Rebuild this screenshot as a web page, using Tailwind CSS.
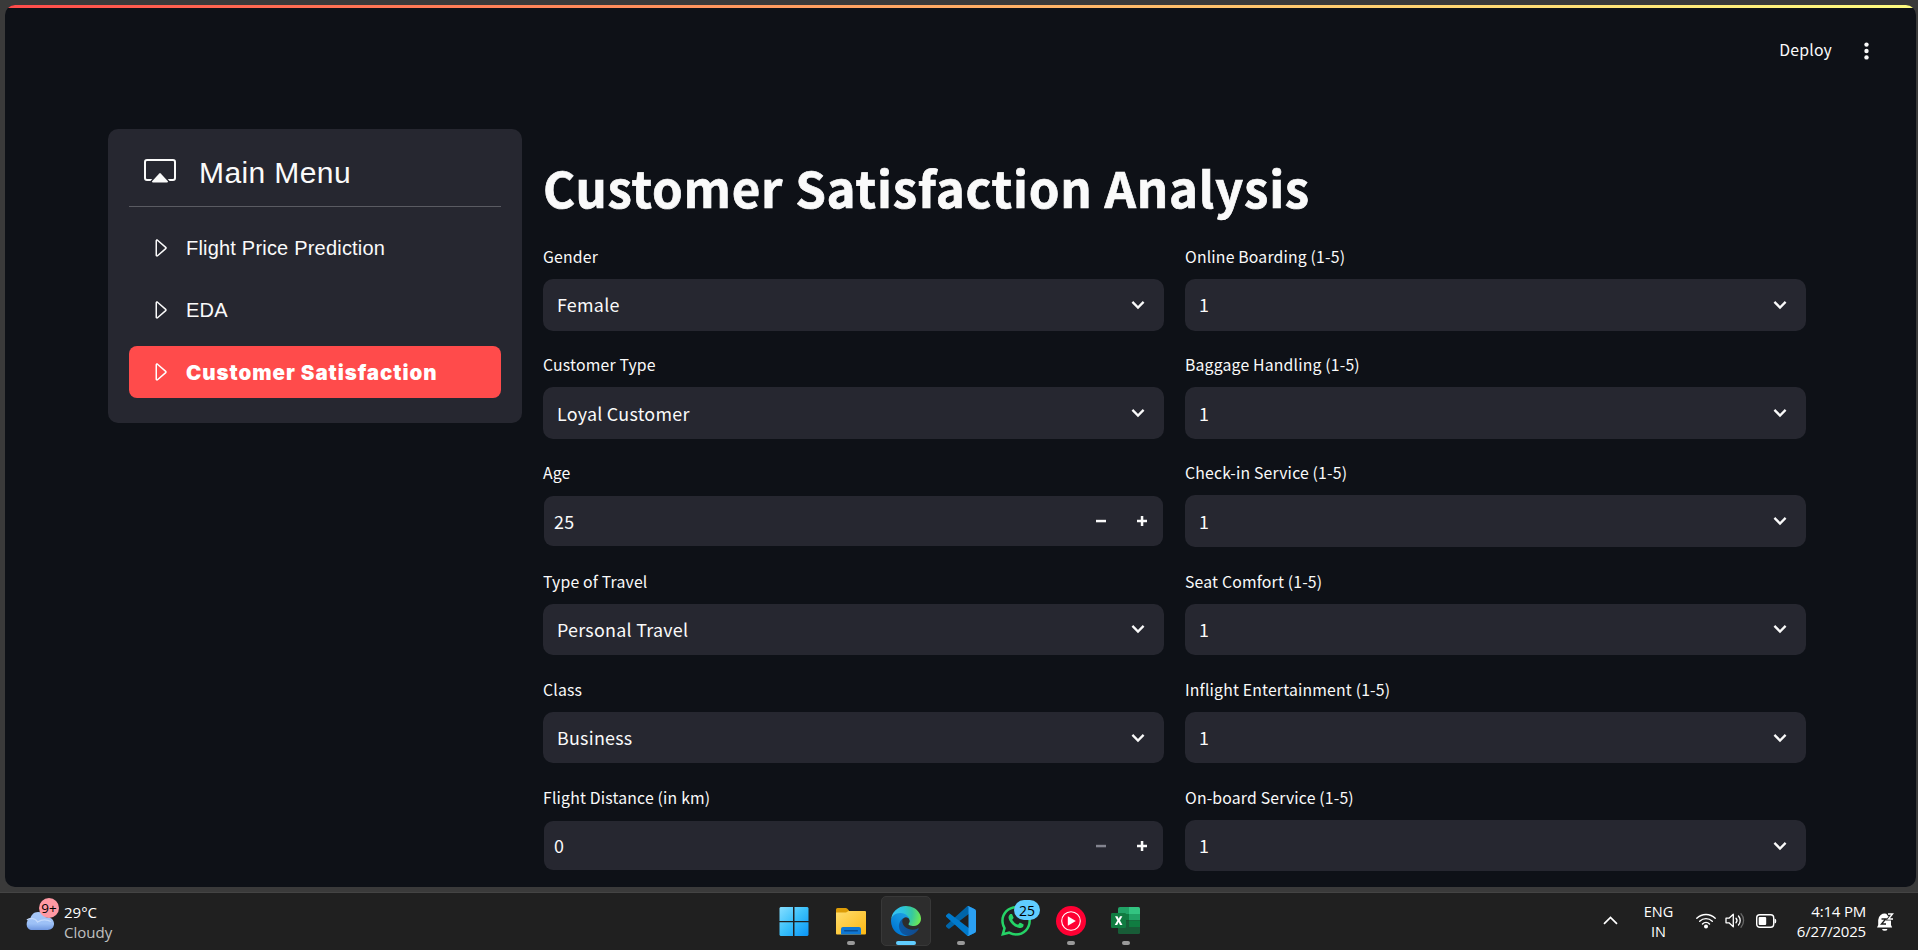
<!DOCTYPE html>
<html lang="en">
<head>
<meta charset="utf-8">
<title>Customer Satisfaction Analysis</title>
<script src="https://cdn.jsdelivr.net/npm/@tailwindcss/browser@4"></script>
</head>
<body class="h-[950px] w-[1918px] overflow-hidden bg-[#3a3a3a] flex flex-col text-[#fafafa]">
<svg class="hidden">
  <symbol id="chevron" viewBox="0 0 14 10"><path d="M1.400 1.900L7 7.500l5.600-5.600" fill="none" stroke="currentColor" stroke-width="2.300"/></symbol>
  <symbol id="minus" viewBox="0 0 10 10"><path d="M0 3.800h10v2.500H0z" fill="currentColor"/></symbol>
  <symbol id="plus" viewBox="0 0 10 10"><path d="M3.800 0h2.500v3.800H10v2.500H6.300V10H3.800V6.300H0V3.800h3.800z" fill="currentColor"/></symbol>
  <symbol id="caret" viewBox="0 0 16 16"><path d="M6 12.796V3.204L11.481 8zm.659.753 5.480-4.796a1 1 0 0 0 0-1.506L6.660 2.451C6.011 1.885 5 2.345 5 3.204v9.592a1 1 0 0 0 1.659.753" fill="currentColor"/></symbol>
</svg>

<!-- App window -->
<main class="mt-[5px] ml-[5px] h-[882px] w-[1911px] shrink-0 overflow-hidden rounded-[10px] bg-[#0e1117] font-['Noto_Sans_CJK_JP',sans-serif]">
  <div class="h-[3px] bg-linear-to-r from-[#ff4b4b] to-[#fffd80]"></div>
  <header class="flex h-[121px] items-start justify-end pt-[29px] pr-[45px]">
    <span class="mr-[30px] text-[15.8px] leading-[26px] tracking-[0.17px]">Deploy</span>
    <svg class="mt-[4px] h-5 w-[9px]" viewBox="0 0 9 20" fill="#fafafa"><circle cx="4.5" cy="3.6" r="2.2"/><circle cx="4.5" cy="10" r="2.2"/><circle cx="4.5" cy="16.4" r="2.2"/></svg>
  </header>

  <div class="flex items-start pl-[103px]">
    <nav class="h-[294px] w-[414px] rounded-[10px] bg-[#262730] px-[21px] font-['Liberation_Sans',sans-serif]">
      <div class="flex h-[78px] items-center border-b border-[#5a5b62] pl-[15px] pt-[7px]">
        <svg class="h-8 w-8 shrink-0" viewBox="0 0 16 16" fill="#fafafa"><path d="M1.500 2A1.500 1.500 0 0 0 0 3.500v8A1.500 1.500 0 0 0 1.500 13h1.720l.9-1H1.500a.5.5 0 0 1-.5-.5v-8a.5.5 0 0 1 .5-.5h13a.5.5 0 0 1 .5.5v8a.5.5 0 0 1-.5.5h-2.620l.9 1h1.720a1.500 1.500 0 0 0 1.500-1.500v-8A1.500 1.500 0 0 0 14.500 2z"/><path d="M7.640 9.200a.5.5 0 0 1 .72 0l3.600 3.960a.5.5 0 0 1-.36.640H4.400a.5.5 0 0 1-.36-.640z"/></svg>
        <span class="ml-[23px] pt-1 text-[30px] leading-9 tracking-[0.4px]">Main Menu</span>
      </div>
      <div class="mt-[15px] flex h-[52px] items-center pl-[19px] text-[20px] tracking-[0.2px]"><svg class="mr-[14px] h-6 w-6"><use href="#caret"/></svg>Flight Price Prediction</div>
      <div class="mt-[10px] flex h-[52px] items-center pl-[19px] text-[20px] tracking-[0.2px]"><svg class="mr-[14px] h-6 w-6"><use href="#caret"/></svg>EDA</div>
      <div class="mt-[10px] flex h-[52px] items-center rounded-[8px] bg-[#ff4b4b] pl-[19px] text-[20.5px] font-black text-white"><svg class="mr-[14px] h-6 w-6"><use href="#caret"/></svg><span class="pt-0.5 font-['Inter'] tracking-[0.95px]">Customer Satisfaction</span></div>
    </nav>

    <section class="ml-[21px] w-[1263px] pt-[25px]">
      <h1 class="text-[49.2px] leading-[66px] font-bold tracking-[0.75px] whitespace-nowrap [-webkit-text-stroke:0.7px_#fafafa]">Customer Satisfaction Analysis</h1>
      <div class="mt-[26px] grid grid-cols-2 gap-x-[21px]">
        <div id="left"></div>
        <div id="right"></div>
      </div>
    </section>
  </div>
</main>

<!-- Taskbar -->
<footer class="mt-[5px] flex h-[58px] shrink-0 items-start justify-between border-t border-[#444] bg-[#202020] font-['Open_Sans',sans-serif] text-[15px]">
  <div class="flex w-[771px] pl-[24px]">
    <div class="relative h-[50px] w-[40px]">
      <svg class="mt-[18px] h-[20px] w-[31px]" viewBox="0 0 32 21" preserveAspectRatio="none"><defs><linearGradient id="cl" x2="0" y2="1"><stop stop-color="#a9c8f8"/><stop offset=".65" stop-color="#9cc0f6"/><stop offset="1" stop-color="#6f97e0"/></linearGradient></defs><path d="M7 20a6.500 6.500 0 0 1-.5-12C7.500 4 10 1 14.500 1c4 0 6.500 2 8 5.500C27.500 6 31 9 31 13.500c0 4-3 6.500-6.500 6.500z" fill="url(#cl)"/><path d="M3 9.500c4-3 9-1.500 11 2 4-2.500 9-3 14-.5" fill="none" stroke="#c4dafc" stroke-width="1.400"/></svg>
      <span class="absolute top-[5px] left-[15px] flex h-5 w-5 items-center justify-center rounded-full bg-[#ff99a4] text-[13.5px] text-black">9+</span>
    </div>
    <div class="pt-[9px] leading-5"><div class="text-white">29°C</div><div class="text-[#c0c0c0]">Cloudy</div></div>
  </div>

  <div class="flex gap-[5px] pt-[3px]">
    <div class="flex h-[50px] w-[50px] justify-center pt-[10px]">
      <svg class="mr-[4px] h-[30px] w-[30px]" viewBox="0 0 30 30"><defs><linearGradient id="wn" gradientUnits="userSpaceOnUse" x1="0" y1="0" x2="30" y2="30"><stop stop-color="#8be0ff"/><stop offset=".5" stop-color="#39c0fb"/><stop offset="1" stop-color="#0a93f5"/></linearGradient></defs><path d="M1.500 1H14v14H.5V2zM15.500 1h13l1 1v13h-14zM.5 16.200H14V30H1.500l-1-1zM15.500 16.200h14V29l-1 1h-13z" fill="url(#wn)"/></svg>
    </div>
    <div class="flex h-[50px] w-[50px] flex-col items-center pt-[10px]">
      <svg class="h-[30px] w-[30px]" viewBox="0 0 30 30"><defs><linearGradient id="fo" x2="1" y2="1"><stop stop-color="#ffdd6e"/><stop offset="1" stop-color="#fcb813"/></linearGradient></defs><path d="M0 3.500Q0 2 1.500 2h8.200q.8 0 1.400.6L13 4.500v4H0z" fill="#dd9c07"/><path d="M0 6.500h10l2.500-1.500H29q1 0 1 1v21.500q0 1-1 1H1q-1 0-1-1z" fill="url(#fo)"/><path d="M5 28.500V23q0-2 2-2h16q2 0 2 2v5.500z" fill="#0f78d4"/><rect x="8" y="24" width="14" height="1.400" rx=".7" fill="#084c91"/></svg>
      <i class="mt-[5px] h-1 w-2 rounded-full bg-[#9a9a9a]"></i>
    </div>
    <div class="flex h-[50px] w-[50px] flex-col items-center rounded-[5px] border border-[#383838] bg-[#2d2d2d] pt-[9px]">
      <svg class="h-[30px] w-[30px]" viewBox="0 0 256 256"><defs><linearGradient id="e1" gradientUnits="userSpaceOnUse" x1="63" y1="177" x2="241" y2="177"><stop stop-color="#0c59a4"/><stop offset="1" stop-color="#114a8b"/></linearGradient><linearGradient id="e2" gradientUnits="userSpaceOnUse" x1="157" y1="101" x2="46" y2="222"><stop stop-color="#1b9de2"/><stop offset=".3" stop-color="#1595df"/><stop offset=".8" stop-color="#0680d7"/><stop offset="1" stop-color="#0078d4"/></linearGradient><radialGradient id="e3" gradientUnits="userSpaceOnUse" cx="30" cy="60" r="230"><stop stop-color="#35c1f1"/><stop offset=".35" stop-color="#2cc4dd"/><stop offset=".65" stop-color="#36c8a0"/><stop offset="1" stop-color="#70ea50"/></radialGradient></defs><path fill="url(#e1)" d="M231 190.500c-3.400 1.800-6.900 3.400-10.500 4.700a101.700 101.700 0 0 1-35.900 6.500c-47.300 0-88.500-32.500-88.500-74.300a31.500 31.500 0 0 1 16.400-27.300c-42.800 1.800-53.800 46.400-53.800 72.500 0 74 68.100 81.400 82.800 81.400 7.900 0 19.800-2.300 27-4.600l1.300-.4a128.300 128.300 0 0 0 66.600-52.800 4 4 0 0 0-5.400-5.700z"/><path fill="url(#e2)" d="M105.700 241.400a79.200 79.200 0 0 1-22.700-21.300 80.700 80.700 0 0 1 29.500-120c3.200-1.500 8.500-4.100 15.600-4a32.400 32.400 0 0 1 25.700 13 31.900 31.900 0 0 1 6.300 18.700c0-.2 24.500-79.600-80-79.600-43.900 0-80 41.700-80 78.200a130.200 130.200 0 0 0 12.100 56 128 128 0 0 0 156.400 67 75.500 75.500 0 0 1-62.800-8z"/><path fill="url(#e3)" d="M152.300 148.900c-.8 1-3.300 2.500-3.300 5.700 0 2.600 1.700 5.100 4.700 7.200 14.400 10 41.500 8.700 41.600 8.700a59.600 59.600 0 0 0 30.300-8.300 61.400 61.400 0 0 0 30.400-52.900c.3-22.400-8-37.300-11.300-43.900C223.500 23.900 177.700 0 128 0A128 128 0 0 0 0 126.200c.5-36.500 36.800-66 80-66 3.500 0 23.500.3 42 10.100 16.300 8.600 24.900 18.900 30.800 29.200 6.200 10.700 7.300 24.100 7.300 29.500 0 5.300-2.700 13.300-7.800 19.900z"/></svg>
      <i class="mt-[5px] h-1 w-5 rounded-full bg-[#60cdff]"></i>
    </div>
    <div class="flex h-[50px] w-[50px] flex-col items-center pt-[10px]">
      <svg class="h-[30px] w-[30px]" viewBox="0 0 100 100"><path d="M96.500 10.800L75.900.9a6.200 6.200 0 0 0-7.100 1.200L1.300 63.600a4.200 4.200 0 0 0 0 6.200l5.500 5a4.200 4.200 0 0 0 5.300.2l81.200-61.600c2.700-2 6.600-.1 6.600 3.300v-.2a6.300 6.300 0 0 0-3.400-5.700z" fill="#0065a9"/><path d="M96.500 89.200l-20.600 9.900a6.200 6.200 0 0 1-7.100-1.200L1.300 36.400a4.200 4.200 0 0 1 0-6.200l5.500-5a4.200 4.200 0 0 1 5.300-.2l81.200 61.600c2.700 2 6.600.1 6.600-3.300v.2a6.300 6.300 0 0 1-3.400 5.700z" fill="#007acc"/><path d="M75.900 99.100a6.200 6.200 0 0 1-7.100-1.200c2.300 2.300 6.200.7 6.200-2.600V4.700c0-3.300-3.900-4.900-6.200-2.600A6.200 6.200 0 0 1 75.900.9l20.600 9.900A6.300 6.300 0 0 1 100 16.400v67.200c0 2.400-1.400 4.600-3.500 5.600z" fill="#2ba0f3"/></svg>
      <i class="mt-[5px] h-1 w-2 rounded-full bg-[#9a9a9a]"></i>
    </div>
    <div class="relative flex h-[50px] w-[50px] flex-col items-center pt-[10px]">
      <svg class="h-[30px] w-[30px]" viewBox="0 0 24 24" fill="#25d366"><path d="M17.472 14.382c-.297-.149-1.758-.867-2.030-.967-.273-.099-.471-.148-.67.150-.197.297-.767.966-.940 1.164-.173.199-.347.223-.644.075-.297-.150-1.255-.463-2.390-1.475-.883-.788-1.480-1.761-1.653-2.059-.173-.297-.018-.458.130-.606.134-.133.298-.347.446-.520.149-.174.198-.298.298-.497.099-.198.050-.371-.025-.520-.075-.149-.669-1.612-.916-2.207-.242-.579-.487-.500-.669-.510-.173-.008-.371-.010-.570-.010-.198 0-.520.074-.792.372-.272.297-1.040 1.016-1.040 2.479 0 1.462 1.065 2.875 1.213 3.074.149.198 2.096 3.200 5.077 4.487.709.306 1.262.489 1.694.625.712.227 1.360.195 1.871.118.571-.085 1.758-.719 2.006-1.413.248-.694.248-1.289.173-1.413-.074-.124-.272-.198-.570-.347m-5.421 7.403h-.004a9.870 9.870 0 0 1-5.031-1.378l-.361-.214-3.741.982.998-3.648-.235-.374a9.860 9.860 0 0 1-1.510-5.260c.001-5.450 4.436-9.884 9.888-9.884 2.640 0 5.122 1.030 6.988 2.898a9.825 9.825 0 0 1 2.893 6.994c-.003 5.450-4.437 9.884-9.885 9.884m8.413-18.297A11.815 11.815 0 0 0 12.050 0C5.495 0 .160 5.335.157 11.892c0 2.096.547 4.142 1.588 5.945L.057 24l6.305-1.654a11.882 11.882 0 0 0 5.683 1.448h.005c6.554 0 11.890-5.335 11.893-11.893a11.821 11.821 0 0 0-3.480-8.413"/></svg>
      <span class="absolute top-[4px] left-[23px] flex h-5 w-[26px] items-center justify-center rounded-full bg-[#60cdff] text-[14px] text-black">25</span>
    </div>
    <div class="flex h-[50px] w-[50px] flex-col items-center pt-[10px]">
      <svg class="h-[30px] w-[30px]" viewBox="0 0 30 30"><circle cx="15" cy="15" r="15" fill="#ff0033"/><circle cx="15" cy="15" r="9.300" fill="none" stroke="#fff" stroke-width="1.100"/><path d="M11.800 10.200v9.600l8-4.800z" fill="#fff"/></svg>
      <i class="mt-[5px] h-1 w-2 rounded-full bg-[#9a9a9a]"></i>
    </div>
    <div class="flex h-[50px] w-[50px] flex-col items-center pt-[10px]">
      <svg class="h-[30px] w-[30px]" viewBox="0 0 30 30"><path d="M7 3q0-2 2-2h9v7H7z" fill="#21a366"/><path d="M18 1h9.500q1.500 0 1.500 1.500V8H18z" fill="#33c481"/><path d="M7 8h11v6.500H7z" fill="#107c41"/><path d="M18 8h11v6.500H18z" fill="#21a366"/><path d="M7 14.500h22v12q0 1.500-1.500 1.500H8.500Q7 28 7 26.500z" fill="#185c37"/><path d="M18 14.500h11V21H18z" fill="#107c41"/><rect y="7" width="15" height="15" rx="1.200" fill="#107c41"/><path d="M4 10.200h2.500l1.200 2.600 1.300-2.600h2.400l-2.400 4.300 2.500 4.400H9l-1.400-2.800-1.400 2.800H3.700l2.600-4.400z" fill="#fff"/></svg>
      <i class="mt-[5px] h-1 w-2 rounded-full bg-[#9a9a9a]"></i>
    </div>
  </div>

  <div class="flex w-[767px] justify-end pr-[24px] text-white">
    <svg class="mt-[23px] h-[9px] w-[15px]" viewBox="0 0 15 9"><path d="M1 7.800l6.500-6.300L14 7.800" fill="none" stroke="#fff" stroke-width="1.700"/></svg>
    <div class="mr-[20px] ml-[23px] w-[35px] pt-[9px] text-center text-[14.5px] leading-5"><div>ENG</div><div>IN</div></div>
    <svg class="mt-[19px] h-[17px] w-5" viewBox="0 0 20 17" fill="none" stroke="#fff" stroke-width="1.400" stroke-linecap="round"><path d="M.8 6.300a13 13 0 0 1 18.400 0M3.700 9.200a8.900 8.900 0 0 1 12.600 0M6.500 12a5 5 0 0 1 7 0"/><circle cx="10" cy="14.500" r="1.300" fill="#fff"/></svg>
    <svg class="mt-[19px] ml-[9px] h-[17px] w-[21px]" viewBox="0 0 21 17" fill="none" stroke="#fff" stroke-width="1.300" stroke-linecap="round" stroke-linejoin="round"><path d="M1 6.200v4.600h3l4.300 4V2.200L4 6.200z"/><path d="M11 6.200a3.500 3.500 0 0 1 0 4.600M13.500 4a6.800 6.800 0 0 1 0 9"/><path d="M16 1.800a10 10 0 0 1 0 13.400" stroke="#666"/></svg>
    <svg class="mt-[20px] ml-[10px] h-[16px] w-[21px]" viewBox="0 0 21 16"><rect x=".7" y="1.700" width="17" height="12.600" rx="3" fill="none" stroke="#fff" stroke-width="1.400"/><rect x="2.700" y="4" width="7.500" height="8" rx="1" fill="#fff"/><path d="M18.500 5.500q1.800 0 1.800 2.500t-1.800 2.500z" fill="#fff"/></svg>
    <div class="ml-[18px] w-[71px] pt-[8px] text-right leading-5 whitespace-nowrap tracking-[-0.2px]"><div>4:14 PM</div><div>6/27/2025</div></div>
    <svg class="mt-[19px] ml-[10px] h-5 w-[18px]" viewBox="0 0 18 20"><path d="M1 15.500l1.200-2.500V8a6.500 6.500 0 0 1 8-6.300L15 7v6l1.200 2.500zM6 17h5.500a2.800 2.300 0 0 1-5.500 0z" fill="#fff"/><path d="M5.500 7h4.200l-4.200 5h4.500" fill="none" stroke="#202020" stroke-width="1.400"/><path d="M11.500 2h5l-4 5h4.500" fill="none" stroke="#202020" stroke-width="3"/><path d="M12 2h4.500l-4 5h4.500" fill="none" stroke="#fff" stroke-width="1.400"/></svg>
  </div>
</footer>

<script>
const select = (label, value) => `
  <div class="mb-[23.2px] h-[85px]">
    <div class="h-[33px] text-[15.8px] leading-[22px] tracking-[0.17px] whitespace-nowrap">${label}</div>
    <div class="flex h-[51.5px] items-center justify-between rounded-[10px] bg-[#262730] pl-[14px] pr-[19px] text-[17.9px] tracking-[0.25px]">
      <span>${value}</span><svg class="h-[10px] w-[14px]"><use href="#chevron"/></svg>
    </div>
  </div>`;
const number = (label, value, atMin) => `
  <div class="mb-[23.2px] h-[85px]">
    <div class="h-[34px] text-[15.8px] leading-[22px] tracking-[0.17px] whitespace-nowrap">${label}</div>
    <div class="mx-px flex h-[49.5px] items-center rounded-[9px] bg-[#262730] pl-[10px] pr-[16px] text-[17.9px] tracking-[0.25px]">
      <span class="grow">${value}</span>
      <svg class="mr-[31px] h-[10px] w-[10px] ${atMin ? 'text-[#83848f]' : 'text-[#fafafa]'}"><use href="#minus"/></svg>
      <svg class="h-[10px] w-[10px]"><use href="#plus"/></svg>
    </div>
  </div>`;
document.getElementById('left').innerHTML =
  select('Gender', 'Female') + select('Customer Type', 'Loyal Customer') + number('Age', '25', false) +
  select('Type of Travel', 'Personal Travel') + select('Class', 'Business') + number('Flight Distance (in km)', '0', true);
document.getElementById('right').innerHTML =
  ['Online Boarding', 'Baggage Handling', 'Check-in Service', 'Seat Comfort', 'Inflight Entertainment', 'On-board Service']
    .map(n => select(n + ' (1-5)', '1')).join('');
</script>
</body>
</html>
